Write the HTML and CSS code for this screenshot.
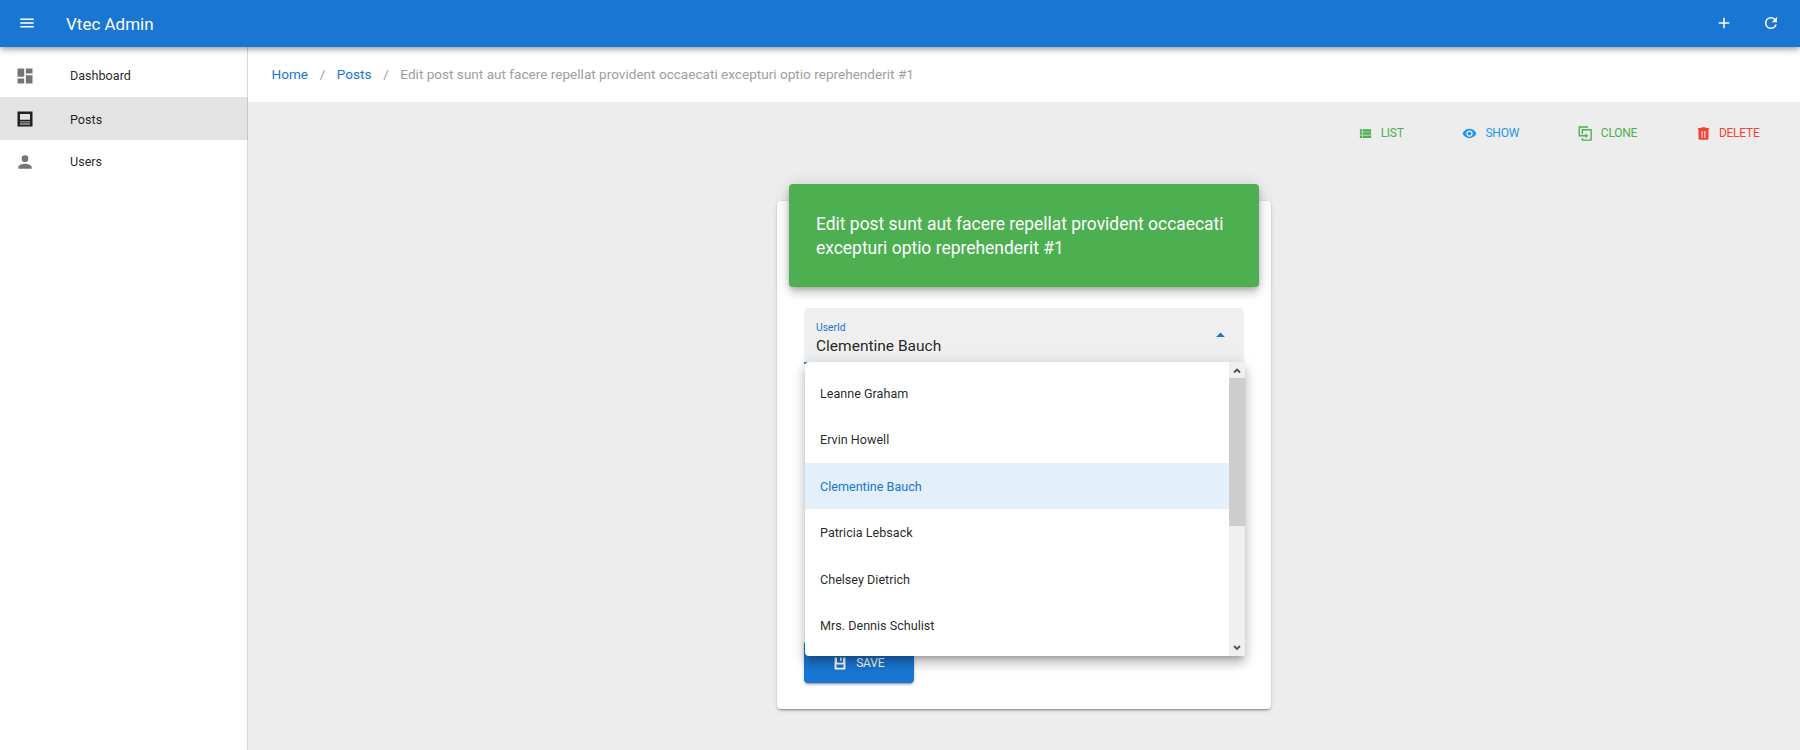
FILE: index.html
```html
<!DOCTYPE html>
<html lang="en">
<head>
<meta charset="utf-8">
<title>Vtec Admin</title>
<link rel="stylesheet" href="styles.css">
</head>
<body>
<header class="appbar">
  <svg class="icon bar-icon" viewBox="0 0 24 24"><path d="M3 6h18v2H3zM3 11h18v2H3zM3 16h18v2H3z"/></svg>
  <span class="brand">Vtec Admin</span>
  <svg class="icon bar-icon add" viewBox="0 0 24 24"><path d="M19 13h-6v6h-2v-6H5v-2h6V5h2v6h6z"/></svg>
  <svg class="icon bar-icon" viewBox="0 0 24 24"><path d="M17.65 6.35A7.96 7.96 0 0 0 12 4a8 8 0 1 0 7.73 10h-2.08A6 6 0 1 1 12 6c1.66 0 3.14.69 4.22 1.78L13 11h7V4z"/></svg>
</header>
<div class="shell">
  <nav class="drawer">
    <a class="nav-item"><svg class="icon nav-icon" viewBox="0 0 24 24"><path d="M3 13h8V3H3zm0 8h8v-6H3zm10 0h8V11h-8zm0-18v6h8V3z"/></svg><span>Dashboard</span></a>
    <a class="nav-item active"><svg class="icon nav-icon" viewBox="0 0 24 24"><path fill-rule="evenodd" d="M3 3h18v18H3zM6 6v7h12V6zM6 15v1h12v-1zM6 17.500v1h12v-1z"/></svg><span class="nav-text">Posts</span></a>
    <a class="nav-item"><svg class="icon nav-icon" viewBox="0 0 24 24"><path d="M12 12a4 4 0 1 0 0-8 4 4 0 0 0 0 8zm0 2c-2.670 0-8 1.340-8 4v2h16v-2c0-2.660-5.330-4-8-4z"/></svg><span>Users</span></a>
  </nav>
  <main class="main">
    <div class="crumbs">
      <a class="crumb">Home</a><span class="slash">/</span><a class="crumb">Posts</a><span class="slash">/</span><span class="here">Edit post sunt aut facere repellat provident occaecati excepturi optio reprehenderit #1</span>
    </div>
    <div class="actions">
      <a class="action green"><svg class="icon small" viewBox="0 0 24 24"><path d="M3 14h4v-4H3zm0 5h4v-4H3zM3 9h4V5H3zm5 5h13v-4H8zm0 5h13v-4H8zM8 5v4h13V5z"/></svg><span>LIST</span></a>
      <a class="action blue"><svg class="icon small" viewBox="0 0 24 24"><path d="M12 4.500C7 4.500 2.730 7.610 1 12c1.730 4.390 6 7.500 11 7.500s9.270-3.110 11-7.500c-1.730-4.390-6-7.500-11-7.500zM12 17a5 5 0 1 1 0-10 5 5 0 0 1 0 10zm0-8a3 3 0 1 0 0 6 3 3 0 0 0 0-6z"/></svg><span>SHOW</span></a>
      <a class="action green"><svg class="icon small" viewBox="0 0 24 24"><path class="line" d="M14 15.500H2V1.500h14M7 13V6h14v16.500H7V19"/><path d="M12 11.500l4.500 4-4.500 4z"/></svg><span>CLONE</span></a>
      <a class="action red"><svg class="icon small" viewBox="0 0 24 24"><path fill-rule="evenodd" d="M9 2L8 3H3v2h1v15a2 2 0 0 0 2 2h12a2 2 0 0 0 2-2V5h1V3h-5l-1-1zM9 8h1.700v11H9zM13.300 8H15v11h-1.700z"/></svg><span>DELETE</span></a>
    </div>
    <section class="card">
      <h1 class="banner">Edit post sunt aut facere repellat provident occaecati excepturi optio reprehenderit #1</h1>
      <div class="form">
        <div class="field">
          <div class="field-text"><span class="label">UserId</span><span class="value">Clementine Bauch</span></div>
          <svg class="icon caret" viewBox="0 0 24 24"><path d="M7.500 14.500l4.500-4.500 4.500 4.500z"/></svg>
          <div class="menu">
            <ul class="options">
              <li class="option">Leanne Graham</li>
              <li class="option">Ervin Howell</li>
              <li class="option selected">Clementine Bauch</li>
              <li class="option">Patricia Lebsack</li>
              <li class="option">Chelsey Dietrich</li>
              <li class="option">Mrs. Dennis Schulist</li>
            </ul>
            <div class="scrollbar">
              <svg class="arrow" viewBox="0 0 16 16"><path d="M5 10.500l3-3 3 3"/></svg>
              <div class="thumb"></div>
              <svg class="arrow" viewBox="0 0 16 16"><path d="M5 6l3 3 3-3"/></svg>
            </div>
          </div>
        </div>
        <button class="save"><svg class="icon save-icon" viewBox="0 0 24 24"><path fill-rule="evenodd" d="M2 1h20v22H2zM6.500 1v9.500h11V1zM5.500 14v6h13v-6z"/><path d="M12 1h3v6h-3z"/></svg><span>SAVE</span></button>
      </div>
    </section>
  </main>
</div>
</body>
</html>
```
FILE: styles.css
```css
* { box-sizing: border-box; }
body {
  margin: 0;
  height: 750px;
  overflow: hidden;
  display: flex;
  flex-direction: column;
  font-family: Roboto, "Liberation Sans", sans-serif;
  color: rgba(0, 0, 0, .87);
  background: #ededed;
}
.icon { display: block; flex: none; fill: currentColor; }
.line { fill: none; stroke: currentColor; stroke-width: 2.2; }
.appbar {
  position: relative;
  z-index: 2;
  flex: none;
  height: 46.5px;
  display: flex;
  align-items: center;
  padding: 0 20px 0 18px;
  color: #fff;
  background: #1976d2;
  box-shadow: 0 2px 4px -1px rgba(0,0,0,.2), 0 4px 5px rgba(0,0,0,.14), 0 1px 10px rgba(0,0,0,.12);
}
.bar-icon { width: 18px; height: 18px; }
.brand { margin-left: 30px; padding-top: 1px; font-size: 17px; }
.add { margin-left: auto; margin-right: 29px; }
.shell { flex: 1; display: flex; min-height: 0; }
.drawer {
  flex: none;
  width: 248px;
  padding-top: 7.5px;
  background: #fff;
  border-right: 1px solid #d9d9d9;
}
.nav-item {
  height: 43px;
  display: flex;
  align-items: center;
  gap: 35px;
  padding-left: 15px;
  font-size: 12.6px;
}
.nav-icon { width: 20px; height: 20px; color: #757575; }
.nav-text { padding-top: 1px; }
.active { background: #e3e3e3; margin-right: -1px; border-right: 1px solid #c6c6c6; }
.active .nav-icon { color: #212121; }
.main { flex: 1; min-width: 0; }
.crumbs {
  height: 55px;
  display: flex;
  align-items: center;
  padding: 0 24px 0 23.500px;
  font-size: 13.58px;
  background: #fff;
}
.crumb { color: #1976d2; }
.slash, .here { color: #9e9e9e; }
.slash { width: 28.800px; text-align: center; }
.actions {
  height: 64px;
  display: flex;
  justify-content: flex-end;
  gap: 58.800px;
  padding: 0 40.500px 1px 0;
}
.action { display: flex; align-items: center; gap: 8px; font-size: 12px; letter-spacing: -.25px; }
.small { width: 15px; height: 15px; }
.green { color: #4caf50; }
.blue { color: #2196f3; }
.red { color: #f44336; }
.card {
  width: 494px;
  height: 508px;
  display: flex;
  flex-direction: column;
  margin: 35.500px auto 0;
  padding: 0 12px;
  border-radius: 4px;
  background: #fff;
  box-shadow: 0 3px 1px -2px rgba(0,0,0,.2), 0 2px 2px rgba(0,0,0,.14), 0 1px 5px rgba(0,0,0,.12);
}
.banner {
  flex: none;
  height: 103px;
  margin: -17.500px 0 0;
  padding: 28px 27px;
  border-radius: 4px;
  font-size: 17.45px;
  font-weight: 400;
  line-height: 24px;
  color: #fff;
  background: #4caf50;
  box-shadow: 0 3px 5px -1px rgba(0,0,0,.2), 0 6px 10px rgba(0,0,0,.14), 0 1px 18px rgba(0,0,0,.12);
}
.form { padding: 21px 15px 0; }
.field {
  position: relative;
  height: 56px;
  display: flex;
  align-items: center;
  justify-content: space-between;
  padding: 0 12px;
  border-bottom: 2px solid #1976d2;
  border-radius: 4px 4px 0 0;
  background: #efefef;
}
.field-text { display: flex; flex-direction: column; padding-top: 9px; }
.label { font-size: 10.3px; line-height: 14px; color: #1976d2; }
.value { font-size: 15.5px; line-height: 22px; }
.caret { width: 23px; height: 23px; color: #1976d2; }
.menu {
  position: absolute;
  z-index: 1;
  left: 1px;
  top: 54px;
  width: 440px;
  height: 294px;
  display: flex;
  border-radius: 4px;
  background: #fff;
  box-shadow: 0 5px 5px -3px rgba(0,0,0,.2), 0 8px 10px 1px rgba(0,0,0,.14), 0 3px 14px 2px rgba(0,0,0,.12);
}
.options { flex: 1; margin: 0; padding: 8px 0 0; list-style: none; }
.option { height: 46.500px; display: flex; align-items: center; padding: .5px 0 0 15px; font-size: 12.6px; }
.selected { color: #1976d2; background: #e3effa; }
.scrollbar { width: 16px; display: flex; flex-direction: column; background: #f0f0f0; }
.arrow { width: 16px; height: 16px; fill: none; stroke: #505050; stroke-width: 1.8; }
.thumb { height: 148px; margin-bottom: auto; background: #cdcdcd; }
.save {
  width: 109.500px;
  height: 42.500px;
  margin-top: 277px;
  display: flex;
  align-items: center;
  justify-content: center;
  gap: 9px;
  padding: 3px 0 0;
  border: 0;
  border-radius: 4px;
  font: 12px Roboto, "Liberation Sans", sans-serif;
  letter-spacing: -.2px;
  color: #fff;
  background: #1976d2;
  box-shadow: 0 3px 1px -2px rgba(0,0,0,.2), 0 2px 2px rgba(0,0,0,.14), 0 1px 5px rgba(0,0,0,.12);
}
.save-icon { width: 14px; height: 13px; }
```
